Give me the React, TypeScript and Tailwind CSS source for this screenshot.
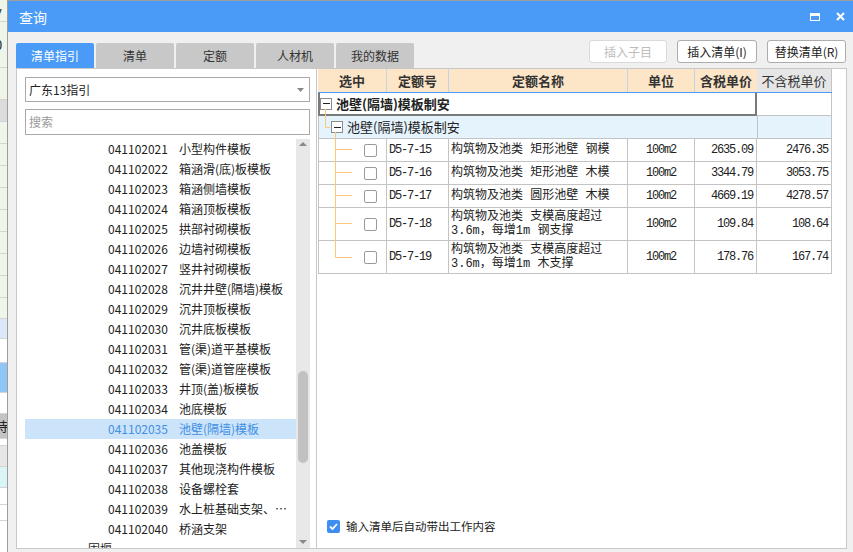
import React from 'react';

const listItems: [string, string][] = [
  ['041102021', '小型构件模板'],
  ['041102022', '箱涵滑(底)板模板'],
  ['041102023', '箱涵侧墙模板'],
  ['041102024', '箱涵顶板模板'],
  ['041102025', '拱部衬砌模板'],
  ['041102026', '边墙衬砌模板'],
  ['041102027', '竖井衬砌模板'],
  ['041102028', '沉井井壁(隔墙)模板'],
  ['041102029', '沉井顶板模板'],
  ['041102030', '沉井底板模板'],
  ['041102031', '管(渠)道平基模板'],
  ['041102032', '管(渠)道管座模板'],
  ['041102033', '井顶(盖)板模板'],
  ['041102034', '池底模板'],
  ['041102035', '池壁(隔墙)模板'],
  ['041102036', '池盖模板'],
  ['041102037', '其他现浇构件模板'],
  ['041102038', '设备螺栓套'],
  ['041102039', '水上桩基础支架、…'],
  ['041102040', '桥涵支架'],
];

type Row = { code: string; name: string[]; unit: string; tax: string; notax: string; tall?: boolean };

const rows: Row[] = [
  { code: 'D5-7-15', name: ['构筑物及池类 矩形池壁 钢模'], unit: '100m2', tax: '2635.09', notax: '2476.35' },
  { code: 'D5-7-16', name: ['构筑物及池类 矩形池壁 木模'], unit: '100m2', tax: '3344.79', notax: '3053.75' },
  { code: 'D5-7-17', name: ['构筑物及池类 圆形池壁 木模'], unit: '100m2', tax: '4669.19', notax: '4278.57' },
  { code: 'D5-7-18', name: ['构筑物及池类 支模高度超过', '3.6m，每增1m 钢支撑'], unit: '100m2', tax: '109.84', notax: '108.64', tall: true },
  { code: 'D5-7-19', name: ['构筑物及池类 支模高度超过', '3.6m，每增1m 木支撑'], unit: '100m2', tax: '178.76', notax: '167.74', tall: true },
];

const tabs = ['清单指引', '清单', '定额', '人材机', '我的数据'];

const strip: { h: number; bg: string; t?: string }[] = [
  { h: 22, bg: 'bg-[#eef6e9]', t: 'v' },
  { h: 46, bg: 'bg-[#eef6e9]', t: '0' },
  { h: 32, bg: 'bg-[#eef6e9]' },
  { h: 22, bg: 'bg-[#dcdcdc]' },
  { h: 22, bg: 'bg-[#eef6e9]' },
  { h: 22, bg: 'bg-[#eef6e9]' },
  { h: 22, bg: 'bg-[#eef6e9]' },
  { h: 22, bg: 'bg-[#eef6e9]' },
  { h: 22, bg: 'bg-[#eef6e9]' },
  { h: 22, bg: 'bg-[#eef6e9]' },
  { h: 22, bg: 'bg-[#eef6e9]' },
  { h: 22, bg: 'bg-[#eef6e9]' },
  { h: 21, bg: 'bg-[#eef6e9]' },
  { h: 20, bg: 'bg-[#dce8fa]' },
  { h: 24, bg: 'bg-white' },
  { h: 30, bg: 'bg-[#90c5f6]' },
  { h: 21, bg: 'bg-white' },
  { h: 25, bg: 'bg-[#c4c4c4]', t: '待' },
  { h: 7, bg: 'bg-white' },
  { h: 21, bg: 'bg-[#e6e6e6]' },
  { h: 21, bg: 'bg-[#daf5f6]' },
  { h: 17, bg: 'bg-white' },
  { h: 16, bg: 'bg-white' },
  { h: 40, bg: 'bg-white' },
];

const MinusBox = () => (
  <div className="w-[12px] h-[12px] shrink-0 border border-[#8c8c8c] bg-white flex items-center justify-center">
    <div className="w-[7px] h-[1px] bg-[#222]" />
  </div>
);

const Check = () => (
  <div className="w-[13px] h-[13px] rounded-[2px] border border-[#9a9a9a] bg-white" />
);

export default function App() {
  return (
    <div className="w-[853px] h-[552px] flex overflow-hidden bg-white font-['Noto_Sans_CJK_SC',sans-serif] text-[#222]">
      {/* background app strip */}
      <div className="w-[7px] shrink-0 flex flex-col overflow-hidden">
        {strip.map((s, i) => (
          <div
            key={i}
            style={{ height: s.h }}
            className={`${s.bg} border-b border-[#d4d4d4] shrink-0 text-[13px] whitespace-nowrap overflow-hidden flex items-center`}
          >
            {s.t && <span className="ml-[-5px]">{s.t}</span>}
          </div>
        ))}
      </div>

      {/* dialog */}
      <div className="flex-1 flex flex-col min-w-0 border-l border-t border-[#9d9d9d]">
        <div className="h-[31px] shrink-0 bg-[#4a9bf8] flex items-center pl-[11px] pr-[8px] text-white">
          <span className="text-[14px] leading-none">查询</span>
          <div className="ml-auto flex items-center gap-[16px]">
            <div className="w-[10px] h-[8px] border-[1.5px] border-t-[3px] border-white" />
            <svg width="9" height="9" viewBox="0 0 9 9">
              <path d="M1 1 L8 8 M8 1 L1 8" stroke="white" strokeWidth="2" />
            </svg>
          </div>
        </div>

        <div className="flex-1 min-h-0 bg-[#f0f0f0] flex flex-col pl-[8px] pr-[6px] pb-[3px]">
          <div className="h-[36px] shrink-0 flex items-start">
            <div className="flex gap-[2px] mt-[11px]">
              {tabs.map((t, i) => (
                <div
                  key={t}
                  className={`w-[78px] h-[25px] rounded-t-[2px] flex items-center justify-center text-[12px] ${
                    i === 0 ? 'bg-[#4a9bf8] text-white' : 'bg-[#c8c8c8] text-[#333]'
                  }`}
                >
                  {t}
                </div>
              ))}
            </div>
            <div className="ml-auto mr-[1px] mt-[8px] flex gap-[10px]">
              <button className="w-[78px] h-[23px] rounded-[3px] border border-[#dadada] bg-white text-[12px] text-[#bdbdbd]">插入子目</button>
              <button className="w-[80px] h-[23px] rounded-[3px] border border-[#adadad] bg-white text-[12px] text-[#222]">插入清单(I)</button>
              <button className="w-[79px] h-[23px] rounded-[3px] border border-[#adadad] bg-white text-[12px] text-[#222]">替换清单(R)</button>
            </div>
          </div>

          <div className="flex-1 min-h-0 flex border border-[#c8c8c8] bg-white">
            {/* left panel */}
            <div className="w-[299px] shrink-0 flex flex-col pt-[8px] pl-[8px] pr-[6px]">
              <div className="h-[25px] shrink-0 border border-[#a9a9a9] flex items-center pl-[3px] pr-[5px] text-[12px]">
                广东13指引
                <svg className="ml-auto" width="7" height="4" viewBox="0 0 7 4">
                  <path d="M0 0 L7 0 L3.5 4Z" fill="#888" />
                </svg>
              </div>
              <div className="h-[26px] shrink-0 mt-[7px] border border-[#a9a9a9] flex items-center pl-[3px] text-[12px] text-[#9a9a9a]">
                搜索
              </div>
              <div className="flex-1 min-h-0 mt-[4px] flex">
                <div className="flex-1 min-w-0 overflow-hidden">
                  {listItems.map(([c, n]) => {
                    const sel = c === '041102035';
                    return (
                      <div
                        key={c}
                        className={`h-[20px] flex items-center pl-[83px] text-[12px] whitespace-nowrap ${
                          sel ? 'bg-[#cce4f9] text-[#3f8fe6]' : ''
                        }`}
                      >
                        <span className="w-[71px] shrink-0">{c}</span>
                        <span>{n}</span>
                      </div>
                    );
                  })}
                  <div className="h-[20px] flex items-center pl-[63px] text-[12px]">围堰</div>
                </div>
                <div className="w-[14px] shrink-0 bg-[#e8e8e8] flex flex-col items-center">
                  <svg className="mt-[3px]" width="8" height="4" viewBox="0 0 8 4">
                    <path d="M0 4 L4 0 L8 4Z" fill="#8a8a8a" />
                  </svg>
                  <div className="mt-[225px] w-[10px] h-[92px] rounded-full bg-[#c1c1c1]" />
                  <svg className="mt-auto mb-[4px]" width="8" height="4" viewBox="0 0 8 4">
                    <path d="M0 0 L8 0 L4 4Z" fill="#8a8a8a" />
                  </svg>
                </div>
              </div>
            </div>

            {/* right panel */}
            <div className="flex-1 min-w-0 flex flex-col border-l border-[#c8c8c8] pl-[1px]">
              <div className="relative w-[514px] text-[12px]">
                <div className="h-[24px] flex bg-[#fde5c8] border-b border-[#4a9bf8] text-[13px] font-bold text-[#333]">
                  <div className="w-[69px] flex items-center justify-center border-r border-[#c6d4e2]">选中</div>
                  <div className="w-[62px] flex items-center justify-center border-r border-[#c6d4e2]">定额号</div>
                  <div className="w-[179px] flex items-center justify-center border-r border-[#c6d4e2]">定额名称</div>
                  <div className="w-[67px] flex items-center justify-center border-r border-[#c6d4e2]">单位</div>
                  <div className="w-[62px] flex items-center justify-center">含税单价</div>
                  <div className="w-[75px] flex items-center justify-center bg-[#e6e6e6] font-normal border-r border-[#c4c4c4]">不含税单价</div>
                </div>

                <div className="h-[23px] flex">
                  <div className="w-[439px] flex items-center gap-[4px] border-l-2 border-b-2 border-r-2 border-[#7a7a7a] text-[13px] font-bold">
                    <MinusBox />
                    <span>池壁(隔墙)模板制安</span>
                  </div>
                  <div className="w-[75px] border-r border-b border-[#c4c4c4]" />
                </div>

                <div className="h-[23px] flex bg-[#e5f3fd]">
                  <div className="w-[439px] flex items-center gap-[4px] pl-[12px] border-l border-b border-[#c4c4c4] text-[13px]">
                    <MinusBox />
                    <span>池壁(隔墙)模板制安</span>
                  </div>
                  <div className="w-[75px] border-l border-r border-b border-[#c4c4c4]" />
                </div>

                {rows.map((r) => (
                  <div key={r.code} className={`flex ${r.tall ? 'h-[33px]' : 'h-[23px]'} font-['Liberation_Mono','Noto_Sans_CJK_SC',monospace]`}>
                    <div className="w-[69px] flex items-center pl-[45px] border-l border-r border-b border-[#c4c4c4]">
                      <Check />
                    </div>
                    <div className="w-[62px] flex items-center pl-[2px] border-r border-b border-[#c4c4c4] text-[12px] tracking-[-1.2px]">
                      {r.code}
                    </div>
                    <div className="w-[179px] flex flex-col justify-center pl-[2px] border-r border-b border-[#c4c4c4] leading-[14px] whitespace-nowrap">
                      {r.name.map((l) => (
                        <span key={l}>{l}</span>
                      ))}
                    </div>
                    <div className="w-[67px] flex items-center justify-center border-r border-b border-[#c4c4c4] text-[12px] tracking-[-1.2px]">
                      {r.unit}
                    </div>
                    <div className="w-[62px] flex items-center justify-end pr-[3px] border-r border-b border-[#c4c4c4] text-[12px] tracking-[-1.2px]">
                      {r.tax}
                    </div>
                    <div className="w-[75px] flex items-center justify-end pr-[3px] border-r border-b border-[#c4c4c4] text-[12px] tracking-[-1.2px]">
                      {r.notax}
                    </div>
                  </div>
                ))}

                <svg className="absolute left-0 top-0 pointer-events-none" width="60" height="210" viewBox="0 0 60 210">
                  <g stroke="#fbc77a" strokeWidth="1" fill="none">
                    <path d="M7.5 40 V58.5 H12" />
                    <path d="M17.5 63 V188.5" />
                    <path d="M17.5 80.5 H34 M17.5 103.5 H34 M17.5 126.5 H34 M17.5 154.5 H34 M17.5 188.5 H34" />
                  </g>
                </svg>
              </div>

              <div className="mt-auto mb-[13px] pl-[9px] flex items-center gap-[6px]">
                <div className="w-[13px] h-[13px] rounded-[2px] bg-[#3d8ef0] flex items-center justify-center">
                  <svg width="9" height="7" viewBox="0 0 9 7">
                    <path d="M1 3.5 L3.5 6 L8 1" stroke="white" strokeWidth="1.8" fill="none" />
                  </svg>
                </div>
                <span className="text-[11.5px]">输入清单后自动带出工作内容</span>
              </div>
            </div>
          </div>
        </div>
      </div>
    </div>
  );
}
